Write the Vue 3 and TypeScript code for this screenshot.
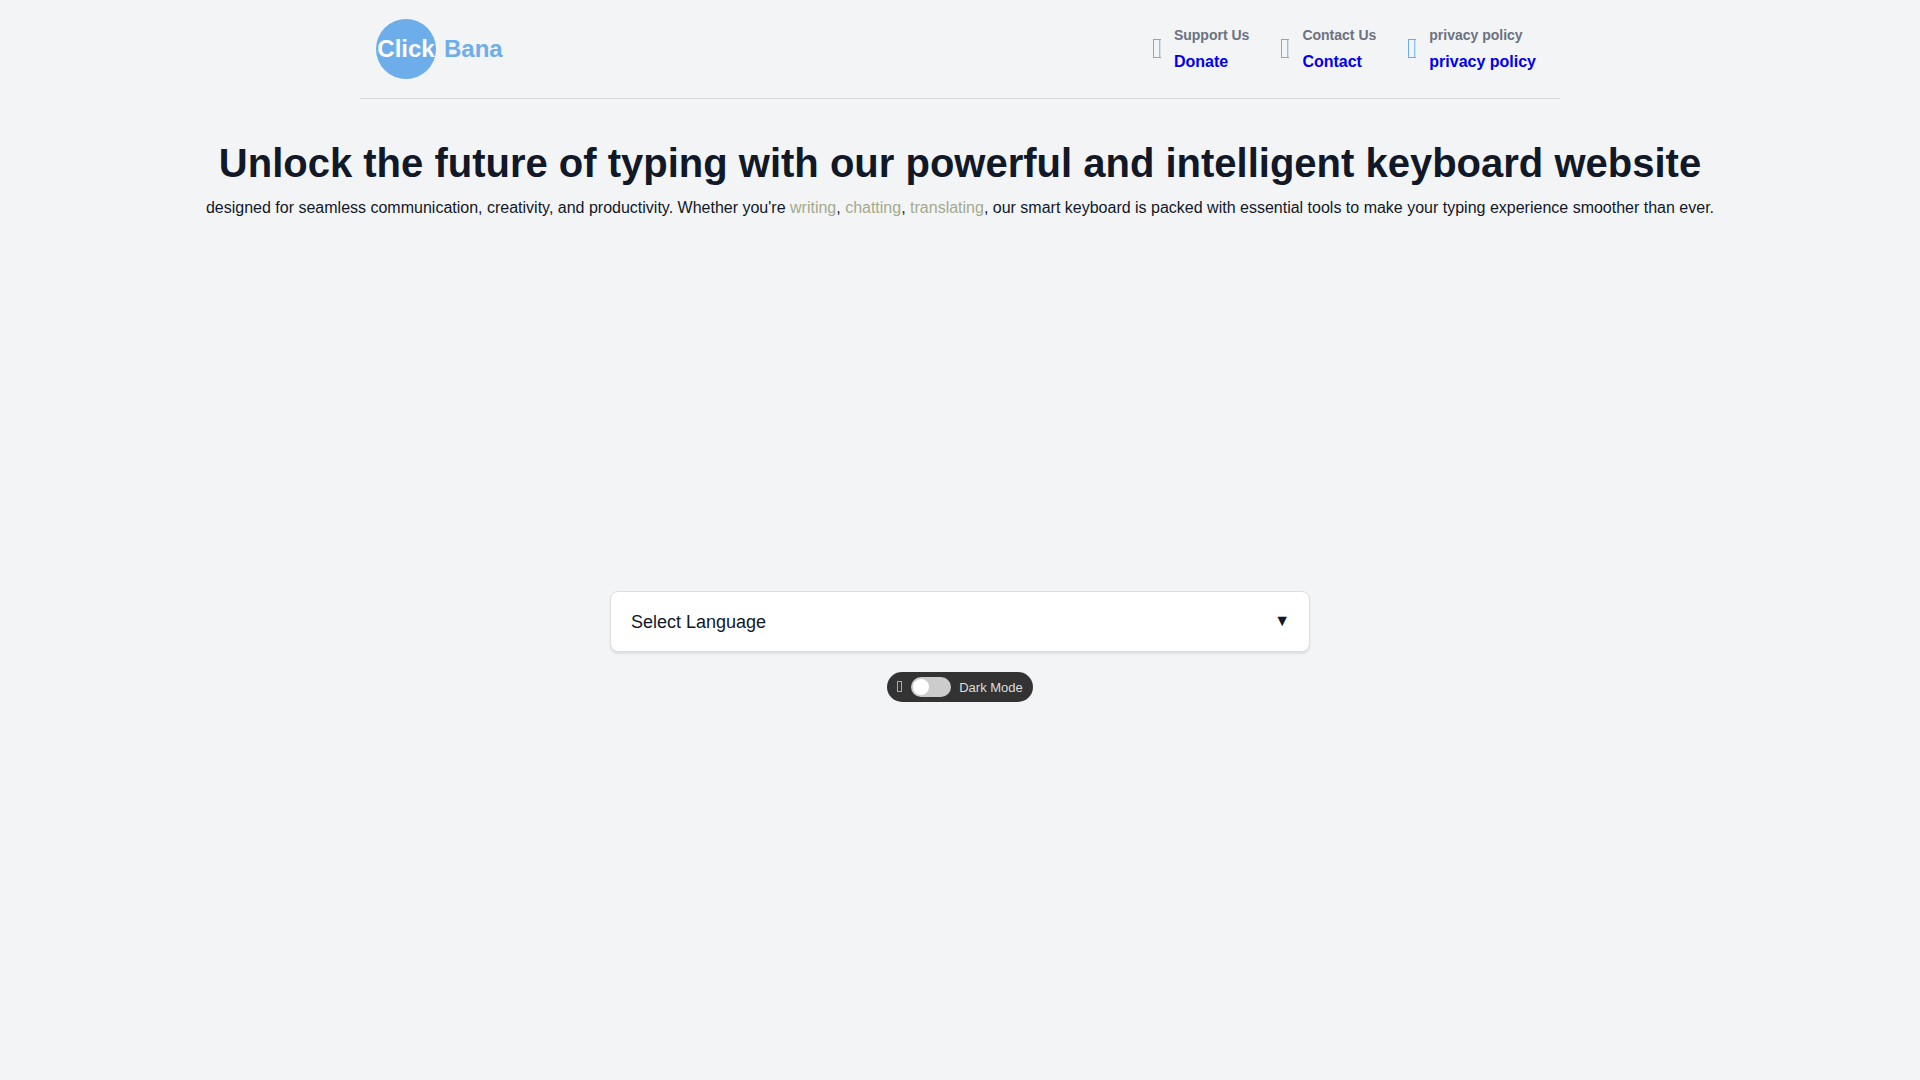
<script setup lang="ts">
import { ref } from 'vue'

interface HeaderLink {
  id: string
  title: string
  label: string
}

const headerLinks: HeaderLink[] = [
  { id: 'donate', title: 'Support Us', label: 'Donate' },
  { id: 'contact', title: 'Contact Us', label: 'Contact' },
  { id: 'privacy', title: 'privacy policy', label: 'privacy policy' },
]

const language = ref('')
const dark = ref(false)
</script>

<template>
  <div class="page">
    <header class="header">
      <div class="logo">
        <span class="logo-circle">Click</span>
        <span class="logo-name">Bana</span>
      </div>
      <nav class="links">
        <div v-for="link in headerLinks" :key="link.id" class="link-item">
          <svg class="link-icon" width="8" height="20" viewBox="0 0 8 20" aria-hidden="true">
            <path d="M0 .5H8M0 18.5H8M.5 0V19" fill="none" stroke="#6daeea" />
            <path d="M6.5 1V18" fill="none" stroke="#8fc1ee" />
            <path d="M7.5 1V18" fill="none" stroke="#cfe2f4" />
          </svg>
          <div class="link-text">
            <span class="link-title">{{ link.title }}</span>
            <a class="link-anchor" :href="'#' + link.id">{{ link.label }}</a>
          </div>
        </div>
      </nav>
    </header>

    <main class="main">
      <section class="intro">
        <h1>Unlock the future of typing with our powerful and intelligent keyboard website</h1>
        <p>
          designed for seamless communication, creativity, and productivity. Whether you're
          <span class="accent">writing</span>, <span class="accent">chatting</span>,
          <span class="accent">translating</span>, our smart keyboard is packed with essential tools to make your
          typing experience smoother than ever.
        </p>
      </section>

      <div class="language">
        <select v-model="language" aria-label="Select Language">
          <option value="">Select Language</option>
        </select>
        <span class="arrow" aria-hidden="true">▼</span>
      </div>

      <label class="mode">
        <svg width="6" height="12" viewBox="0 0 6 12" aria-hidden="true">
          <rect x=".5" y=".5" width="4" height="10" fill="none" stroke="#aaa" />
        </svg>
        <input v-model="dark" type="checkbox" />
        <span>Dark Mode</span>
      </label>
    </main>
  </div>
</template>

<style>
body {
  margin: 0;
  background: #f3f4f6;
}
</style>

<style scoped>
.page {
  color: #111827;
  font-family: "Liberation Sans", Arial, sans-serif;
  font-size: 16px;
}

.header {
  display: flex;
  align-items: center;
  justify-content: space-between;
  box-sizing: border-box;
  max-width: 1200px;
  margin: 0 auto;
  padding: 19px 16px;
  border-bottom: 1px solid #d6d8dc;
}

.logo {
  display: flex;
  align-items: center;
  gap: 8px;
  color: #6daeea;
  font-size: 24px;
  font-weight: 700;
}

.logo-circle {
  display: flex;
  align-items: center;
  justify-content: center;
  width: 60px;
  height: 60px;
  border-radius: 50%;
  background: #6daeea;
  color: #fff;
}

.links {
  display: flex;
  gap: 32px;
  padding-right: 8px;
}

.link-item {
  display: flex;
  align-items: center;
  gap: 13px;
}

.link-text {
  display: flex;
  flex-direction: column;
  gap: 8px;
  font-weight: 700;
}

.link-title {
  color: #6b7280;
  font-size: 14px;
  line-height: 18px;
}

.link-anchor {
  color: #0000ee;
  line-height: 20px;
  text-decoration: none;
}

.main {
  display: flex;
  flex-direction: column;
  align-items: center;
}

.intro {
  margin: 40px 16px 0;
  text-align: center;
}

h1 {
  margin: 0;
  font-size: 40px;
  line-height: 48px;
}

p {
  margin: 9px 0 0;
  line-height: 24px;
}

.accent {
  color: #a3ab8d;
}

.language {
  position: relative;
  width: 700px;
  max-width: 90%;
  margin-top: 371px;
}

.language select {
  display: block;
  box-sizing: border-box;
  width: 100%;
  height: 61px;
  padding: 0 20px;
  border: 1px solid #ddd;
  border-radius: 8px;
  background: #fff;
  box-shadow: 0 2px 2px rgba(0, 0, 0, 0.08);
  color: #111827;
  font: inherit;
  font-size: 18px;
  appearance: none;
}

.arrow {
  position: absolute;
  top: 20px;
  right: 20px;
  font-size: 16px;
  line-height: 20px;
  pointer-events: none;
}

.mode {
  display: flex;
  align-items: center;
  gap: 8px;
  height: 30px;
  margin-top: 20px;
  padding: 0 10px;
  border-radius: 15px;
  background: #333;
  color: #ddd;
  font-size: 13px;
}

.mode input {
  display: flex;
  align-items: center;
  box-sizing: border-box;
  width: 40px;
  height: 20px;
  margin: 0;
  padding: 2px;
  border-radius: 10px;
  background: #ccc;
  appearance: none;
}

.mode input::before {
  width: 16px;
  height: 16px;
  border-radius: 50%;
  background: #fff;
  content: "";
}

.mode input:checked {
  justify-content: flex-end;
  background: #6daeea;
}
</style>
